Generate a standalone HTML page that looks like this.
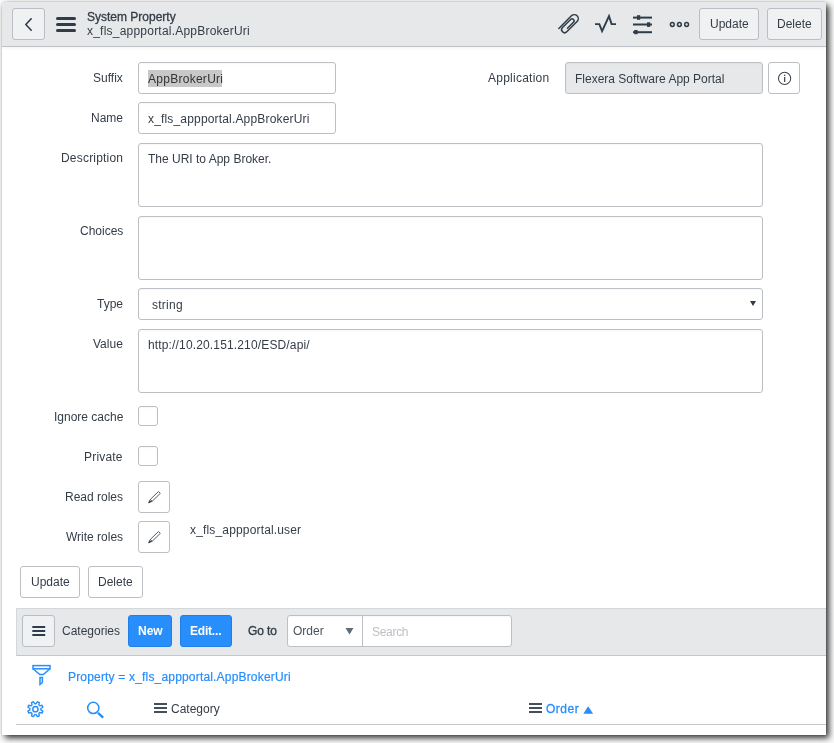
<!DOCTYPE html>
<html><head><meta charset="utf-8">
<style>
*{box-sizing:border-box;margin:0;padding:0}
html,body{width:834px;height:743px;overflow:hidden;background:#fafafa}
body{position:relative;font-family:"Liberation Sans",sans-serif;font-size:12px;color:#343d47}
.win{position:absolute;left:2px;top:2px;width:824px;height:733px;background:#fff;box-shadow:3px 3px 6px rgba(0,0,0,.8),0 0 2px rgba(0,0,0,.15);border-radius:3px 3px 0 0;overflow:hidden}
.hdr{position:absolute;left:0;top:0;width:824px;height:45px;background:#e6e8ea;border-bottom:1px solid #bfc3c8;box-shadow:0 1px 3px rgba(0,0,0,.06)}
.a{position:absolute}
.t{will-change:transform;position:absolute;font-size:12px;line-height:16px;white-space:nowrap}
.lbl{will-change:transform;position:absolute;font-size:12px;line-height:16px;white-space:nowrap;right:711px;text-align:right}
.box{position:absolute;border:1px solid #bcc0c5;border-radius:3px;background:#fff;box-shadow:inset 0 1px 2px rgba(0,0,0,.035)}
.hbtn{position:absolute;border:1px solid #b9bec4;border-radius:3px;background:#f0f1f3}
.btn{position:absolute;border:1px solid #bcc0c5;border-radius:3px;background:#fff}
svg{position:absolute;overflow:visible}
</style></head><body>
<div class="win"></div>
<div class="hdr a" style="left:2px;top:2px"></div>

<!-- header -->
<div class="hbtn" style="left:12px;top:8px;width:33px;height:32px"></div>
<svg style="left:0;top:0" width="834" height="50">
  <polyline points="31.2,18.8 25.8,24.5 31.2,30.2" fill="none" stroke="#343d47" stroke-width="1.6" stroke-linecap="round" stroke-linejoin="round"/>
  <g stroke="#2e3d49" stroke-width="3" stroke-linecap="round">
    <line x1="57.5" y1="18.5" x2="74.5" y2="18.5"/>
    <line x1="57.5" y1="24.5" x2="74.5" y2="24.5"/>
    <line x1="57.5" y1="30.5" x2="74.5" y2="30.5"/>
  </g>
  <!-- paperclip -->
  <g transform="translate(569.3,23.6) rotate(-45)" fill="none" stroke="#2e3d49" stroke-width="1.5" stroke-linecap="round">
    <path d="M -10.8 -4 L 7.0 -4 A 4 4 0 0 1 7.0 4 L -7.6 4 A 3 3 0 0 1 -7.6 -2 L 3.9 -2 A 2 2 0 0 1 3.9 2 L -4.6 2"/>
  </g>
  <!-- pulse -->
  <polyline points="595,24.1 599.3,24.1 602.1,31.2 609,16.2 611.6,24.1 616,24.1" fill="none" stroke="#2e3d49" stroke-width="1.9" stroke-linejoin="miter" stroke-miterlimit="3"/>
  <!-- sliders -->
  <g stroke="#2e3d49" stroke-width="2">
    <line x1="633" y1="17.6" x2="652" y2="17.6"/>
    <line x1="633" y1="24.5" x2="652" y2="24.5"/>
    <line x1="633" y1="32.2" x2="652" y2="32.2"/>
  </g>
  <g fill="#2e3d49">
    <rect x="637" y="15.2" width="3.2" height="4.6"/>
    <rect x="647" y="22.3" width="3.2" height="4.6"/>
    <rect x="634.2" y="30" width="3.4" height="4.2"/>
  </g>
  <!-- dots -->
  <g fill="none" stroke="#2e3d49" stroke-width="1.5">
    <circle cx="672.3" cy="24.5" r="1.9"/>
    <circle cx="679.4" cy="24.5" r="1.9"/>
    <circle cx="686.6" cy="24.5" r="1.9"/>
  </g>
</svg>
<div class="t" style="left:87px;top:9px;color:#343d47;-webkit-text-stroke:0.3px #343d47">System Property</div>
<div class="t" style="left:87px;top:23px;color:#343d47;letter-spacing:0.22px">x_fls_appportal.AppBrokerUri</div>
<div class="hbtn" style="left:699px;top:8px;width:60px;height:32px"></div>
<div class="t" style="left:710px;top:16px">Update</div>
<div class="hbtn" style="left:767px;top:8px;width:55px;height:32px"></div>
<div class="t" style="left:777px;top:16px">Delete</div>

<!-- form -->
<div class="lbl" style="top:70px">Suffix</div>
<div class="box" style="left:138px;top:62px;width:198px;height:32px"></div>
<div class="a" style="left:148px;top:70px;width:74px;height:17px;background:#c8c8c8"></div>
<div class="t" style="left:148px;top:71px;letter-spacing:0.27px;color:#333">AppBrokerUri</div>

<div class="t" style="left:488px;top:70px;letter-spacing:0.25px">Application</div>
<div class="box" style="left:565px;top:62px;width:198px;height:32px;background:#e6e8ea"></div>
<div class="t" style="left:575px;top:71px">Flexera Software App Portal</div>
<div class="btn" style="left:768px;top:62px;width:32px;height:32px"></div>
<svg style="left:0;top:0" width="834" height="100">
  <circle cx="784.6" cy="78.4" r="6.1" fill="none" stroke="#3d4650" stroke-width="1.05"/>
  <rect x="784.05" y="77" width="1.25" height="5" fill="#3d4650"/>
  <rect x="784.05" y="74.7" width="1.25" height="1.3" fill="#3d4650"/>
</svg>

<div class="lbl" style="top:110px">Name</div>
<div class="box" style="left:138px;top:102px;width:198px;height:32px"></div>
<div class="t" style="left:148px;top:111px;letter-spacing:0.17px">x_fls_appportal.AppBrokerUri</div>

<div class="lbl" style="top:150px;letter-spacing:0.2px">Description</div>
<div class="box" style="left:138px;top:143px;width:625px;height:64px"></div>
<div class="t" style="left:148px;top:151px">The URI to App Broker.</div>

<div class="lbl" style="top:223px">Choices</div>
<div class="box" style="left:138px;top:216px;width:625px;height:64px"></div>

<div class="lbl" style="top:296px">Type</div>
<div class="box" style="left:138px;top:288px;width:625px;height:32px"></div>
<div class="t" style="left:152px;top:297px;letter-spacing:0.25px">string</div>
<svg style="left:0;top:0" width="834" height="330">
  <polygon points="750,301 756,301 753,306" fill="#2e3d49"/>
</svg>

<div class="lbl" style="top:336px">Value</div>
<div class="box" style="left:138px;top:329px;width:625px;height:64px"></div>
<div class="t" style="left:148px;top:337px;letter-spacing:0.15px">http://10.20.151.210/ESD/api/</div>

<div class="lbl" style="top:409px">Ignore cache</div>
<div class="box" style="left:138px;top:406px;width:20px;height:20px"></div>
<div class="lbl" style="top:449px;letter-spacing:0.2px">Private</div>
<div class="box" style="left:138px;top:446px;width:20px;height:20px"></div>

<div class="lbl" style="top:489px">Read roles</div>
<div class="btn" style="left:138px;top:481px;width:32px;height:32px"></div>
<div class="lbl" style="top:529px">Write roles</div>
<div class="btn" style="left:138px;top:521px;width:32px;height:32px"></div>
<div class="t" style="left:190px;top:522px;letter-spacing:0.16px">x_fls_appportal.user</div>
<svg style="left:0;top:0" width="834" height="560">
  <g transform="translate(148.4,503.1) rotate(-44)">
    <path d="M0.3 0 L4 -1.3 L15.3 -1.3 L15.3 1.3 L4 1.3 Z M4 -1.3 L4 1.3" fill="none" stroke="#4b5661" stroke-width="0.9" stroke-linejoin="round"/>
    <path d="M0 0 L3 -1.1 L3 1.1 Z" fill="#2e3d49"/>
  </g>
  <g transform="translate(148.4,543.1) rotate(-44)">
    <path d="M0.3 0 L4 -1.3 L15.3 -1.3 L15.3 1.3 L4 1.3 Z M4 -1.3 L4 1.3" fill="none" stroke="#4b5661" stroke-width="0.9" stroke-linejoin="round"/>
    <path d="M0 0 L3 -1.1 L3 1.1 Z" fill="#2e3d49"/>
  </g>
</svg>

<div class="btn" style="left:20px;top:566px;width:60px;height:32px"></div>
<div class="t" style="left:31px;top:574px">Update</div>
<div class="btn" style="left:88px;top:566px;width:55px;height:32px"></div>
<div class="t" style="left:98px;top:574px">Delete</div>

<!-- list toolbar -->
<div class="a" style="left:16px;top:608px;width:810px;height:48px;background:#e6e8ea;border-top:1px solid #d5d8db;border-bottom:1px solid #c3c7cc;border-left:1px solid #d5d8db"></div>
<div class="hbtn" style="left:22px;top:615px;width:33px;height:32px"></div>
<svg style="left:0;top:0" width="834" height="743">
  <g stroke="#2e3d49" stroke-width="2">
    <line x1="32.3" y1="627" x2="45.2" y2="627"/>
    <line x1="32.3" y1="631" x2="45.2" y2="631"/>
    <line x1="32.3" y1="635" x2="45.2" y2="635"/>
  </g>
</svg>
<div class="t" style="left:62px;top:623px">Categories</div>
<div class="a" style="left:128px;top:615px;width:44px;height:32px;background:#278efc;border:1px solid #1f7ee8;border-radius:3px"></div>
<div class="t" style="left:138px;top:623px;color:#fff;font-weight:bold">New</div>
<div class="a" style="left:180px;top:615px;width:52px;height:32px;background:#278efc;border:1px solid #1f7ee8;border-radius:3px"></div>
<div class="t" style="left:190px;top:623px;color:#fff;font-weight:bold;letter-spacing:-0.2px">Edit...</div>
<div class="t" style="left:248px;top:623px;color:#2e3d49;-webkit-text-stroke:0.35px #2e3d49;letter-spacing:-0.1px">Go to</div>
<div class="box" style="left:287px;top:615px;width:225px;height:32px"></div>
<div class="a" style="left:362px;top:616px;width:1px;height:30px;background:#bcc0c5"></div>
<div class="t" style="left:293px;top:623px;color:#4a535c">Order</div>
<svg style="left:0;top:0" width="834" height="743">
  <polygon points="345.5,628 353.5,628 349.5,634.5" fill="#5f6b75"/>
</svg>
<div class="t" style="left:372px;top:624px;color:#bcc1c6;letter-spacing:-0.3px">Search</div>

<!-- filter row -->
<svg style="left:0;top:0" width="834" height="743">
  <g fill="none" stroke="#278efc" stroke-width="1.5">
    <rect x="33" y="665.6" width="17" height="3.2"/>
    <path d="M33 668.8 L39.8 674.6 L43.3 674.6 L50 668.8"/>
    <path d="M40 677.5 L42.4 677.5 L42.4 682.5 L40 684.5 Z"/>
  </g>
</svg>
<div class="t" style="left:68px;top:669px;color:#278efc;letter-spacing:0.18px;-webkit-text-stroke:0.2px #278efc">Property = x_fls_appportal.AppBrokerUri</div>

<!-- header row -->
<svg style="left:0;top:0" width="834" height="743">
  <g fill="none" stroke="#278efc" stroke-width="1.5">
    <circle cx="35.4" cy="709.2" r="2.6"/>
    <circle cx="93.3" cy="707.9" r="5.6"/>
    <line x1="98" y1="712.8" x2="103.2" y2="717.6" stroke-width="2.3"/>
  </g>
  <g stroke="#2e3d49" stroke-width="1.8">
    <line x1="154" y1="704" x2="167" y2="704"/>
    <line x1="154" y1="708" x2="167" y2="708"/>
    <line x1="154" y1="712" x2="167" y2="712"/>
    <line x1="529" y1="704" x2="542" y2="704"/>
    <line x1="529" y1="708" x2="542" y2="708"/>
    <line x1="529" y1="712" x2="542" y2="712"/>
  </g>
  <polygon points="583.3,713.7 593.1,713.7 588.2,706.2" fill="#278efc"/>
  <path fill="none" stroke="#278efc" stroke-width="1.4" stroke-linejoin="round" d="M40.85 709.92 L42.85 711.13 L42.03 713.11 L39.76 712.55 L38.75 713.56 L39.31 715.83 L37.33 716.65 L36.12 714.65 L34.68 714.65 L33.47 716.65 L31.49 715.83 L32.05 713.56 L31.04 712.55 L28.77 713.11 L27.95 711.13 L29.95 709.92 L29.95 708.48 L27.95 707.27 L28.77 705.29 L31.04 705.85 L32.05 704.84 L31.49 702.57 L33.47 701.75 L34.68 703.75 L36.12 703.75 L37.33 701.75 L39.31 702.57 L38.75 704.84 L39.76 705.85 L42.03 705.29 L42.85 707.27 L40.85 708.48 Z"/>
</svg>
<div class="t" style="left:171px;top:701px">Category</div>
<div class="t" style="left:546px;top:701px;color:#278efc;-webkit-text-stroke:0.3px #278efc;letter-spacing:0.5px">Order</div>
<div class="a" style="left:16px;top:724px;width:810px;height:1px;background:#c3c7cc"></div>
</body></html>
